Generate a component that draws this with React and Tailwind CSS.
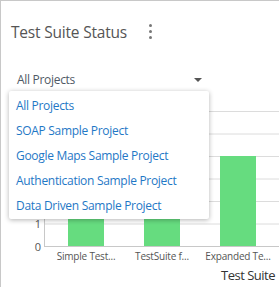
import React from "react";

const items = [
  "All Projects",
  "SOAP Sample Project",
  "Google Maps Sample Project",
  "Authentication Sample Project",
  "Data Driven Sample Project",
];

function Chart() {
  const grid = [10.5, 33, 55.5, 78, 100.5, 123, 145.5];
  const bars = [
    { x: 67, h: 90, label: "Simple Test..." },
    { x: 143, h: 90, label: "TestSuite f..." },
    { x: 219, h: 90, label: "Expanded Te..." },
  ];
  return (
    <svg width="279" height="187" className="block" style={{ fontFamily: "'Open Sans', sans-serif" }}>
      {grid.slice(0, 6).map((y) => (
        <line key={y} x1="43" x2="279" y1={y} y2={y} stroke="#dcdcdc" strokeWidth="1" />
      ))}
      <line x1="43.5" x2="43.5" y1="0" y2="146" stroke="#c8c8c8" strokeWidth="1" />
      <line x1="43" x2="279" y1="145.5" y2="145.5" stroke="#c8c8c8" strokeWidth="1" />
      {bars.map((b) => (
        <rect key={b.x} x={b.x} y={145 - b.h} width="36" height={b.h} fill="#66dc7f" />
      ))}
      <text x="40" y="127" textAnchor="end" fontSize="11" fill="#555">1</text>
      <text x="40" y="149.5" textAnchor="end" fontSize="11" fill="#555">0</text>
      {bars.map((b) => (
        <text key={b.label} x={b.x + 18} y="159" textAnchor="middle" fontSize="10" letterSpacing="-0.2" fill="#555">
          {b.label}
        </text>
      ))}
      <text x="274" y="179" textAnchor="end" fontSize="13" letterSpacing="-0.5" fill="#333">Test Suite</text>
    </svg>
  );
}

export default function App() {
  return (
    <div className="relative w-[279px] h-[287px] overflow-hidden bg-white font-['Open_Sans',sans-serif]">
      <div className="w-[320px] h-[320px] border-l border-t border-[#c8c8c8]">
        <div className="flex items-center pt-[19px] pl-[10px] h-[42px]">
          <span className="text-[15.5px] leading-[22px] text-[#555] tracking-[-0.2px]">Test Suite Status</span>
          <div className="ml-[22px] flex flex-col gap-[3px] items-center">
            <span className="block w-[3px] h-[3px] rounded-full bg-[#777]" />
            <span className="block w-[3px] h-[3px] rounded-full bg-[#777]" />
            <span className="block w-[3px] h-[3px] rounded-full bg-[#777]" />
          </div>
        </div>
        <div className="mt-[27px] ml-[16px] w-[185px] h-[20px] flex items-center justify-between">
          <span className="text-[12px] tracking-[-0.3px] leading-[20px] text-[#4f5a66]">All Projects</span>
          <span className="block w-0 h-0 border-l-[4px] border-r-[4px] border-t-[4px] border-l-transparent border-r-transparent border-t-[#555]" />
        </div>
        <div className="mt-[11px]">
          <Chart />
        </div>
      </div>
      <div className="absolute left-[9px] top-[91px] w-[200px] h-[128px] bg-white rounded-[2px] shadow-[0_1px_5px_rgba(0,0,0,0.3)] pt-[2px]">
        {items.map((t) => (
          <div key={t} className="h-[25px] leading-[25px] pl-[7px] text-[12px] tracking-[-0.3px] text-[#1f78c6] whitespace-nowrap">
            {t}
          </div>
        ))}
      </div>
    </div>
  );
}
